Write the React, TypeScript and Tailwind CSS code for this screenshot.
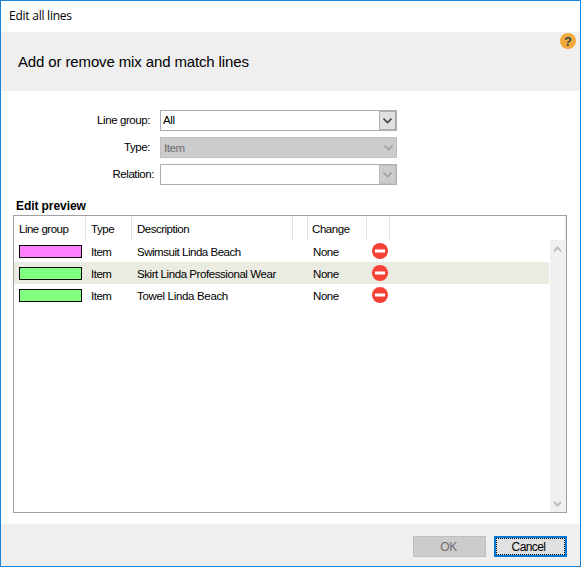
import React from "react";

const rows = [
  { color: "bg-[#ff80ff]", row: "bg-white", text: "Swimsuit Linda Beach", spacing: "tracking-[-0.47px]" },
  { color: "bg-[#80ff80]", row: "bg-[#eaebe1]", text: "Skirt Linda Professional Wear", spacing: "tracking-[-0.43px]" },
  { color: "bg-[#80ff80]", row: "bg-white", text: "Towel Linda Beach", spacing: "tracking-[-0.33px]" },
];

function Chevron({ className }: { className: string }) {
  return (
    <svg width="9" height="6" viewBox="0 0 9 6" className={className} fill="none">
      <path d="M0.5 0.6 4.5 4.6 8.5 0.6" stroke="currentColor" strokeWidth="1.6" />
    </svg>
  );
}

function ScrollArrow({ up = false }: { up?: boolean }) {
  return (
    <svg width="7" height="6" viewBox="0 0 7 6" className="text-[#bfbfbf]" shapeRendering="crispEdges">
      <path d={up ? "M3 0h1v1h1v1h1v1h1v3H6V5H5V4H4V3H3v1H2v1H1v1H0V3h1V2h1V1h1z" : "M0 0h1v1h1v1h1v1h1V2h1V1h1V0h1v3H6v1H5v1H4v1H3V5H2V4H1V3H0z"} fill="currentColor" />
    </svg>
  );
}

function NoEntry() {
  return (
    <svg width="16" height="16" viewBox="0 0 16 16">
      <circle cx="8" cy="8" r="8" fill="#f44336" />
      <rect x="3" y="6.5" width="10" height="3" fill="#fff" />
    </svg>
  );
}

function FormRow({ label, labelPad, children }: { label: string; labelPad: string; children: React.ReactNode }) {
  return (
    <div className="flex h-[21px]">
      <div className={`w-[159px] text-right leading-[20px] ${labelPad}`}>{label}</div>
      {children}
    </div>
  );
}

export default function App() {
  return (
    <div className="flex h-[567px] w-[581px] flex-col border border-[#1883d7] bg-white font-['Liberation_Sans',Arial,sans-serif] text-[11.5px] tracking-[-0.42px] text-black">
      <div className="h-[31px] shrink-0 pl-2 font-['Open_Sans',sans-serif] text-[12px] leading-[30px] tracking-[-0.24px]">Edit all lines</div>

      <header className="flex h-[59px] shrink-0 justify-between bg-[#efefef]">
        <h1 className="pl-[17px] text-[15px] leading-[60px] tracking-[-0.13px]">Add or remove mix and match lines</h1>
        <div className="mt-px mr-1 flex size-4 items-center justify-center rounded-full bg-[#f2a93b] text-[13px] leading-none font-bold tracking-normal text-[#37474f]">?</div>
      </header>

      <div className="flex shrink-0 flex-col gap-[6px] pt-[19px]">
        <FormRow label="Line group:" labelPad="pr-[10px]">
          <div className="flex w-[237px] border border-[#abadb3]">
            <span className="flex-1 pl-[2px] leading-[19px]">All</span>
            <span className="flex w-[17px] items-center justify-center border border-[#abadb3] bg-[#e1e1e1]">
              <Chevron className="text-[#444]" />
            </span>
          </div>
        </FormRow>
        <FormRow label="Type:" labelPad="pr-[10px]">
          <div className="flex w-[237px] items-center border border-[#bfbfbf] bg-[#cccccc] pr-[3px]">
            <span className="flex-1 pt-px pl-[3px] leading-[18px] text-[#6d6d6d]">Item</span>
            <Chevron className="text-[#a0a0a0]" />
          </div>
        </FormRow>
        <FormRow label="Relation:" labelPad="pr-[6px]">
          <div className="flex w-[237px] justify-end border border-[#abadb3]">
            <span className="flex w-[17px] items-center justify-center border border-[#bfbfbf] bg-[#cccccc]">
              <Chevron className="text-[#a0a0a0]" />
            </span>
          </div>
        </FormRow>
      </div>

      <h2 className="h-[30px] shrink-0 pt-[13px] pl-[15px] text-[12px] leading-[16px] font-bold tracking-[-0.08px]">Edit preview</h2>

      <section className="ml-3 flex h-[298px] w-[554px] shrink-0 flex-col border border-[#a0a0a0]">
        <div className="flex h-6 shrink-0 border-r border-[#e5e5e5] leading-[26px]">
          <div className="w-[72px] border-r border-[#e5e5e5] pl-[5px] tracking-[-0.5px]">Line group</div>
          <div className="w-[46px] border-r border-[#e5e5e5] pl-[5px]">Type</div>
          <div className="w-[161px] border-r border-[#e5e5e5] pl-[5px] tracking-[-0.5px]">Description</div>
          <div className="w-[15px] border-r border-[#e5e5e5]" />
          <div className="w-[59px] border-r border-[#e5e5e5] pl-1">Change</div>
          <div className="w-[23px] border-r border-[#e5e5e5]" />
        </div>
        <div className="flex min-h-0 flex-1">
          <div className="flex flex-1 flex-col">
            {rows.map((r) => (
              <div key={r.text} className={`mr-px flex h-[22px] leading-[24px] ${r.row}`}>
                <div className="w-[72px] pt-[5px] pl-[5px]">
                  <div className={`h-[13px] w-[63px] border border-black ${r.color}`} />
                </div>
                <div className="w-[46px] pl-[5px] tracking-[-0.5px]">Item</div>
                <div className={`w-[176px] pl-[5px] ${r.spacing}`}>{r.text}</div>
                <div className="w-[59px] pl-[5px]">None</div>
                <div className="w-[23px] pt-[3px] pl-[5px]"><NoEntry /></div>
              </div>
            ))}
          </div>
          <div className="flex w-4 flex-col items-center justify-between bg-[#f0f0f0] pt-[6px] pr-px pb-[5px]">
            <ScrollArrow up />
            <ScrollArrow />
          </div>
        </div>
      </section>

      <footer className="mt-[11px] flex flex-1 gap-[8px] bg-[#efefef] pt-3 pl-[412px] text-[12px]">
        <button className="h-[21px] w-[73px] border border-[#bfbfbf] bg-[#cccccc] pr-[2px] leading-[20px] text-[#6d6d6d]">OK</button>
        <button className="h-[21px] w-[73px] border-2 border-[#0078d7] bg-[#e1e1e1]">
          <span className="block h-[17px] border border-dotted border-black pr-1 leading-[16px] tracking-[-0.6px]">Cancel</span>
        </button>
      </footer>
    </div>
  );
}
